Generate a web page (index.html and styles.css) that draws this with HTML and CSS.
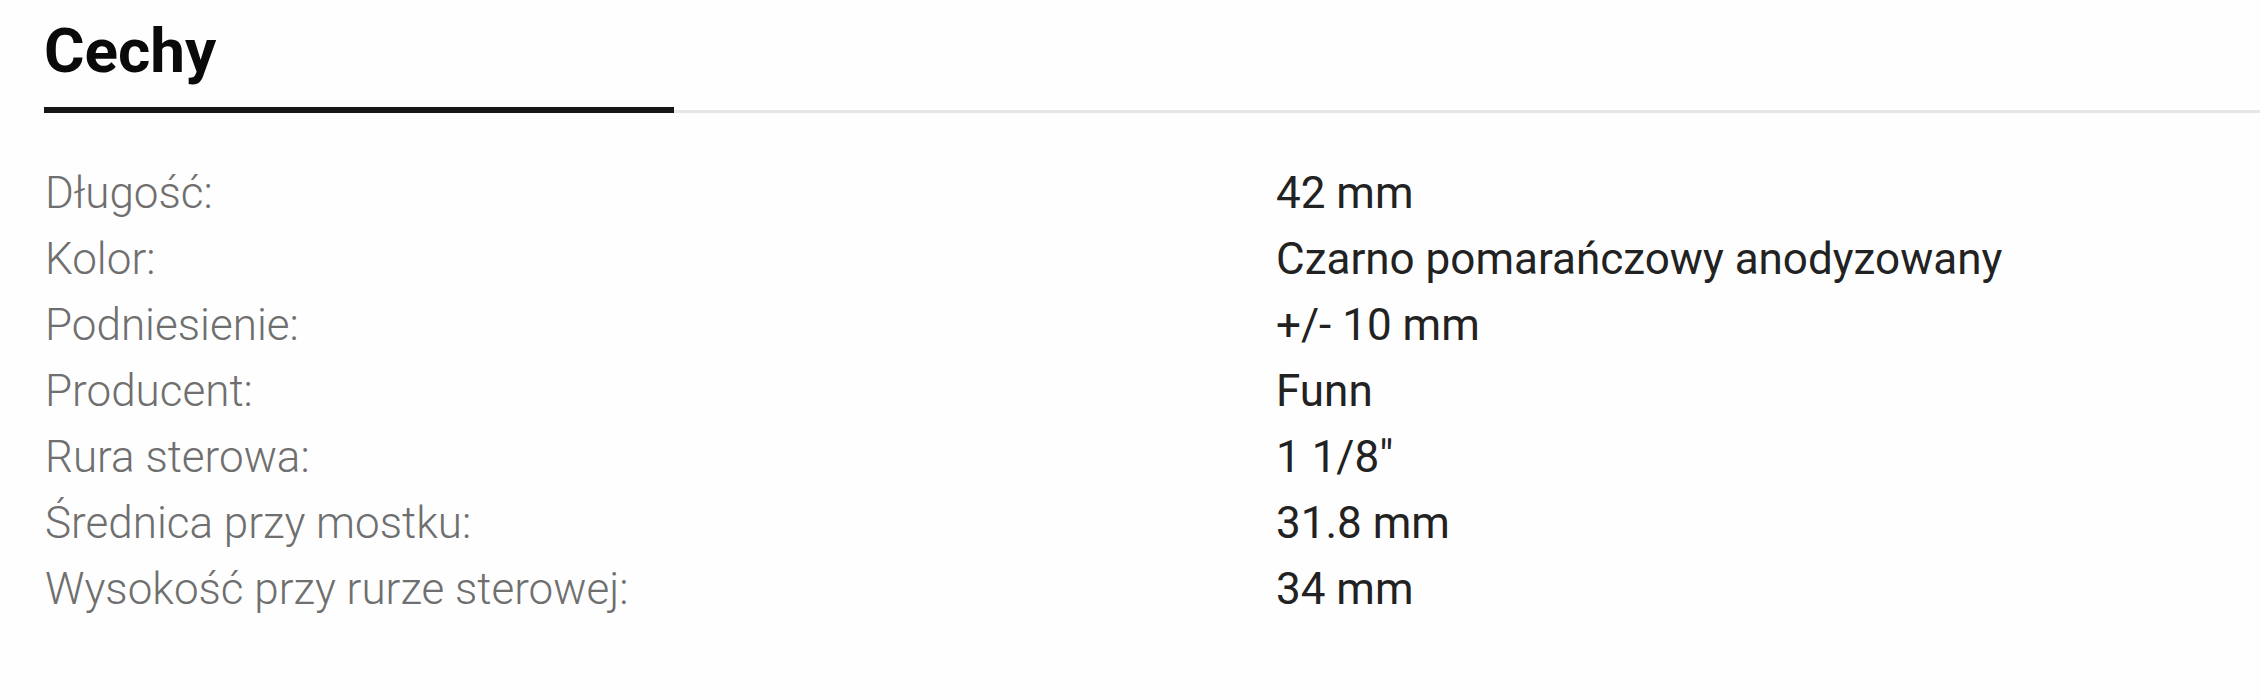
FILE: index.html
```html
<!DOCTYPE html>
<html lang="pl">
<head>
<meta charset="utf-8">
<title>Cechy</title>
<link rel="stylesheet" href="styles.css">
</head>
<body>
<section class="features">
  <div class="tabs">
    <h2 class="tab">Cechy</h2>
  </div>
  <dl class="specs">
    <dt>Długość:</dt><dd>42 mm</dd>
    <dt>Kolor:</dt><dd>Czarno pomarańczowy anodyzowany</dd>
    <dt>Podniesienie:</dt><dd>+/- 10 mm</dd>
    <dt>Producent:</dt><dd>Funn</dd>
    <dt>Rura sterowa:</dt><dd>1 1/8"</dd>
    <dt>Średnica przy mostku:</dt><dd>31.8 mm</dd>
    <dt>Wysokość przy rurze sterowej:</dt><dd>34 mm</dd>
  </dl>
</section>
</body>
</html>
```
FILE: styles.css
```css
html, body {
  margin: 0;
  padding: 0;
  background: #fefefe;
}
body {
  font-family: Roboto, "Liberation Sans", Arial, sans-serif;
}
.features {
  padding: 19px 0 0 44px;
}
.tabs {
  border-bottom: 3px solid #e6e6e6;
  display: flex;
}
.tab {
  margin: 0 0 -3px 0;
  width: 630px;
  padding-bottom: 24px;
  border-bottom: 6px solid #161616;
  font-size: 62px;
  line-height: 64px;
  font-weight: 700;
  color: #0a0a0a;
}
.specs {
  margin: 47px 0 0 1px;
  display: grid;
  grid-template-columns: 1231px 1fr;
  font-size: 44px;
  line-height: 66px;
}
.specs dt {
  font-weight: 300;
  color: #6f6f6f;
}
.specs dd {
  margin: 0;
  font-weight: 400;
  color: #222;
}
```
